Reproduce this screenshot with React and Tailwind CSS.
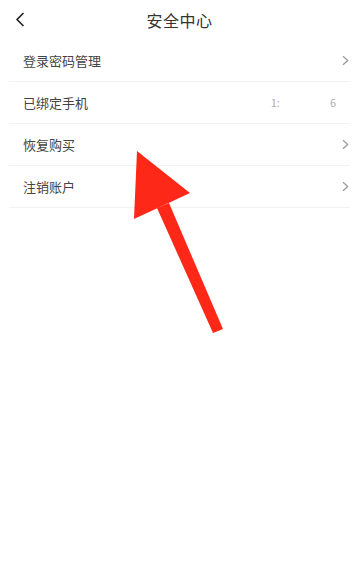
const rows = [
    { label: '登录密码管理', arrow: true },
    { label: '已绑定手机', phone: true },
    { label: '恢复购买', arrow: true },
    { label: '注销账户', arrow: true },
];

const Chevron = ({ className }) => (
    <svg className={className} viewBox="0 0 8 12" fill="none" stroke="currentColor" strokeWidth="1.4" strokeLinecap="round" strokeLinejoin="round">
        <path d="M1.5 1.5 L6.5 6 L1.5 10.5" />
    </svg>
);

const App = () => {
    return (
        <div
            className="relative w-[359px] h-[581px] bg-white overflow-hidden"
            style={{ fontFamily: '"Noto Sans CJK SC", "Noto Sans", sans-serif' }}
        >
            <div className="relative h-[40px] flex items-center justify-center">
                <svg className="absolute left-[15px] top-[12px] w-[10px] h-[15px] text-[#222]" viewBox="0 0 10 15" fill="none" stroke="currentColor" strokeWidth="1.7" strokeLinecap="round" strokeLinejoin="round">
                    <path d="M8 1.5 L2 7.5 L8 13.5" />
                </svg>
                <h1 className="text-[16px] text-[#333] tracking-[0.5px]">安全中心</h1>
            </div>

            <div className="mx-[9px]">
                {rows.map((row) => (
                    <div key={row.label} className="h-[42px] flex items-center border-b border-[#f2f2f2] pl-[14px] pr-[1px]">
                        <span className="flex-1 text-[13px] text-[#444]">{row.label}</span>
                        {row.arrow && <Chevron className="w-[7px] h-[11px] text-[#999]" />}
                        {row.phone && (
                            <div className="flex text-[11px] text-[#b0b0b0] pr-[13px]">
                                <span>1:</span>
                                <span className="ml-[50px]">6</span>
                            </div>
                        )}
                    </div>
                ))}
            </div>

            <svg className="absolute left-0 top-0 w-[359px] h-[581px] pointer-events-none" viewBox="0 0 359 581">
                <polygon points="137,151 134,219 190,193" fill="#fe2819" />
                <polygon points="157,208 169,203 223,329 213,333" fill="#fe2819" />
            </svg>
        </div>
    );
};

export default App;
